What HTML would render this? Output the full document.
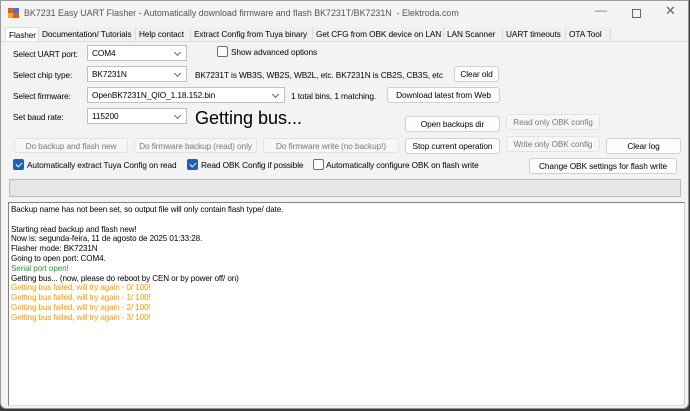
<!DOCTYPE html>
<html><head><meta charset="utf-8"><style>
*{margin:0;padding:0;box-sizing:border-box}
body{width:690px;height:411px;background:#3a3a3a;position:relative;overflow:hidden;font-family:"Liberation Sans",Arial,sans-serif;font-size:8.3px;letter-spacing:-0.1px;color:#000}
.win{position:absolute;left:0;top:0;width:689px;height:409px;background:#f3f3f3;border:1px solid #9a9a9a;border-radius:0 0 6px 6px}
.a{position:absolute;white-space:nowrap}
.btn{position:absolute;background:#fdfdfd;border:1px solid #d0d0d0;border-radius:3px;text-align:center;line-height:14px;white-space:nowrap;overflow:hidden}
.dis{background:#f6f6f6;color:#7a7a7a;border-color:#e2e2e2}
.cb{position:absolute;height:16px;background:#fff;border:1px solid #c0c0c0;line-height:14px;padding-left:4px;white-space:nowrap}
.cb::after{content:"";position:absolute;right:6px;top:4px;width:4px;height:4px;border-right:1px solid #666;border-bottom:1px solid #666;transform:rotate(45deg)}
.chk{position:absolute;width:11px;height:11px;border-radius:2px}
.on{background:#1f5fb8}
.on::after{content:"";position:absolute;left:3.5px;top:1.5px;width:3px;height:5px;border-right:1.3px solid #fff;border-bottom:1.3px solid #fff;transform:rotate(45deg)}
.off{border:1px solid #707070;background:#fff}
.tab{position:absolute;top:26px;height:14px;line-height:14px;padding-left:3px;border-right:1px solid #ddd;background:#f0f0f0;white-space:nowrap;overflow:hidden}
.log div{height:9.8px;line-height:9.8px;white-space:nowrap}
.g{color:#2a9a2a}.o{color:#ff9900}
</style></head><body>
<div class="win">
<div class="a" style="left:7px;top:7px;width:11px;height:10px;background:#e05a2a"><div style="position:absolute;left:5px;top:0;width:6px;height:5px;background:#3a7ad8"></div><div style="position:absolute;left:0;top:5px;width:5px;height:5px;background:#f0b020"></div></div>
<div class="a" style="left:23px;top:7px;font-size:8.9px;letter-spacing:0;color:#555">BK7231 Easy UART Flasher - Automatically download firmware and flash BK7231T/BK7231N&nbsp; - Elektroda.com</div>
<div class="a" style="left:594px;top:2px;font-size:12px;color:#777">—</div>
<div class="a" style="left:631px;top:8px;width:9px;height:9px;border:1px solid #666"></div>
<div class="a" style="left:664px;top:2px;font-size:13px;color:#666">✕</div>

<div class="a" style="left:0;top:40px;width:687px;height:1px;background:#ddd"></div>
<div class="tab" style="left:4px;width:34px;background:#fff;border:1px solid #ddd;border-bottom:none">Flasher</div>
<div class="tab" style="left:38px;width:97px">Documentation/ Tutorials</div>
<div class="tab" style="left:135px;width:55px">Help contact</div>
<div class="tab" style="left:190px;width:122px">Extract Config from Tuya binary</div>
<div class="tab" style="left:312px;width:131px">Get CFG from OBK device on LAN</div>
<div class="tab" style="left:443px;width:59px">LAN Scanner</div>
<div class="tab" style="left:502px;width:63px">UART timeouts</div>
<div class="tab" style="left:565px;width:45px">OTA Tool</div>

<div class="a" style="left:12px;top:48px">Select UART port:</div>
<div class="cb" style="left:86px;top:44px;width:100px">COM4</div>
<div class="chk off" style="left:216px;top:45px"></div>
<div class="a" style="left:230px;top:46px">Show advanced options</div>

<div class="a" style="left:12px;top:69px">Select chip type:</div>
<div class="cb" style="left:86px;top:65px;width:100px">BK7231N</div>
<div class="a" style="left:194px;top:69px">BK7231T is WB3S, WB2S, WB2L, etc. BK7231N is CB2S, CB3S, etc</div>
<div class="btn" style="left:453px;top:65px;width:45px;height:16px">Clear old</div>

<div class="a" style="left:12px;top:90px">Select firmware:</div>
<div class="cb" style="left:86px;top:86px;width:198px">OpenBK7231N_QIO_1.18.152.bin</div>
<div class="a" style="left:290px;top:90px">1 total bins, 1 matching.</div>
<div class="btn" style="left:386px;top:86px;width:113px;height:16px">Download latest from Web</div>

<div class="a" style="left:12px;top:111px">Set baud rate:</div>
<div class="cb" style="left:86px;top:107px;width:100px">115200</div>
<div class="a" style="left:194px;top:107px;font-size:18px;letter-spacing:0">Getting bus...</div>
<div class="btn" style="left:404px;top:115px;width:95px;height:16px">Open backups dir</div>
<div class="btn dis" style="left:505px;top:113px;width:94px;height:16px">Read only OBK config</div>

<div class="btn dis" style="left:13px;top:137px;width:114px;height:15px">Do backup and flash new</div>
<div class="btn dis" style="left:133px;top:137px;width:123px;height:15px">Do firmware backup (read) only</div>
<div class="btn dis" style="left:262px;top:137px;width:136px;height:15px">Do firmware write (no backup!)</div>
<div class="btn" style="left:404px;top:137px;width:95px;height:16px">Stop current operation</div>
<div class="btn dis" style="left:505px;top:135px;width:94px;height:16px">Write only OBK config</div>
<div class="btn" style="left:605px;top:137px;width:75px;height:16px">Clear log</div>

<div class="chk on" style="left:12px;top:158px"></div>
<div class="a" style="left:26px;top:159px">Automatically extract Tuya Config on read</div>
<div class="chk on" style="left:186px;top:158px"></div>
<div class="a" style="left:200px;top:159px">Read OBK Config if possible</div>
<div class="chk off" style="left:312px;top:158px"></div>
<div class="a" style="left:325px;top:159px">Automatically configure OBK on flash write</div>
<div class="btn" style="left:528px;top:157px;width:148px;height:16px">Change OBK settings for flash write</div>

<div class="a" style="left:8px;top:178px;width:672px;height:18px;background:#e6e6e6;border:1px solid #bcbcbc"></div>

<div class="a log" style="left:7px;top:201px;width:677px;height:204px;background:#fff;border:1px solid #828282;border-right-color:#ccc;border-bottom-color:#ddd;padding:2px 0 0 2px;font-size:8.1px">
<div>Backup name has not been set, so output file will only contain flash type/ date.</div>
<div></div>
<div>Starting read backup and flash new!</div>
<div>Now is: segunda-feira, 11 de agosto de 2025 01:33:28.</div>
<div>Flasher mode: BK7231N</div>
<div>Going to open port: COM4.</div>
<div class="g">Serial port open!</div>
<div>Getting bus... (now, please do reboot by CEN or by power off/ on)</div>
<div class="o">Getting bus failed, will try again - 0/ 100!</div>
<div class="o">Getting bus failed, will try again - 1/ 100!</div>
<div class="o">Getting bus failed, will try again - 2/ 100!</div>
<div class="o">Getting bus failed, will try again - 3/ 100!</div>
</div>
</div>
</body></html>
